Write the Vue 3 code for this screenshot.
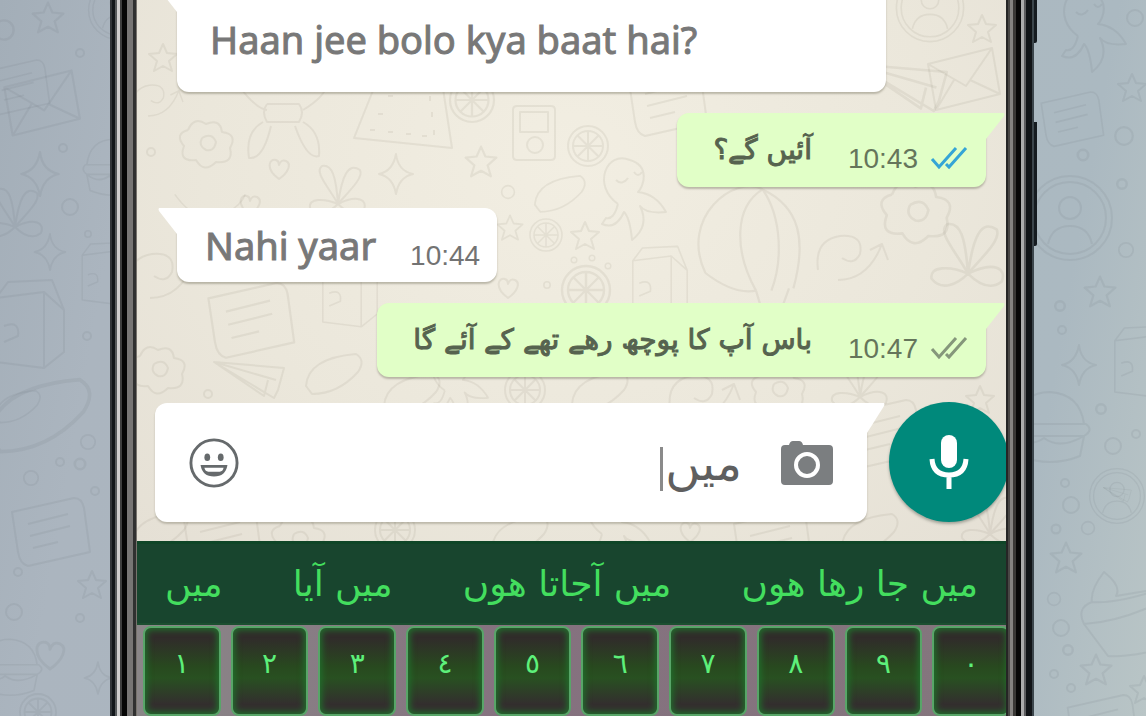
<script setup>
import { ref } from 'vue'

const draft = ref('میں')

const messages = [
  { id: 1, from: 'them', text: 'Haan jee bolo kya baat hai?', lang: 'ur-Latn', wide: true },
  { id: 2, from: 'me', text: 'آئیں گے؟', lang: 'ur', time: '10:43', seen: true },
  { id: 3, from: 'them', text: 'Nahi yaar', lang: 'ur-Latn', time: '10:44' },
  { id: 4, from: 'me', text: 'باس آپ کا پوچھ رھے تھے کے آئے گا', lang: 'ur', time: '10:47', seen: false },
]

const suggestions = ['میں', 'میں آیا', 'میں آجاتا ھوں', 'میں جا رھا ھوں']
const digits = ['١', '٢', '٣', '٤', '٥', '٦', '٧', '٨', '٩', '٠']

const star = 'M0-14L4-5 14-4 6 3 9 13 0 8-9 13-6 3-14-4-4-5Z'
const heart = 'M0 10C-14 0-10-11-3-9Q0-8 0-4Q2-10 7-8C13-5 9 4 0 10Z'
const sparkle = 'M0-20Q2-3 17 0Q3 3 0 20Q-3 3-17 0Q-3-3 0-20Z'
const ring = 'M-8 0a8 8 0 1 0 16 0a8 8 0 1 0-16 0'
const dot = 'M-4 0a4 4 0 1 0 8 0a4 4 0 1 0-8 0'
const flower = 'M-20-12Q-14-26-2-18Q12-24 14-10Q30-8 22 6Q26 22 8 20Q-4 32-12 18Q-30 20-24 4Q-34-8-20-12M-6-4Q4-10 8 0Q6 10-2 8Q-10 4-6-4'
const leaf = 'M-28 14Q-26-14 22-18Q32-12 24 0Q4 22-22 22Z'
const wheel = 'M-20 0a20 20 0 1 0 40 0a20 20 0 1 0-40 0M-15 0a15 15 0 1 0 30 0a15 15 0 1 0-30 0M-14 0H14M0-14V14M-10-10L10 10M-10 10L10-10'
const envelope = 'M-34-16L30-32 38 14-26 30ZM-34-16L4 6 30-32M-26 30L-8 0M38 14L8 0'
const page = 'M-36-16L26-30Q34-30 36-20L42 24-20 38Q-28 36-30 24ZM-20-4L20-14M-18 8L22-2M-15 20L10 14'
const gadget = 'M-18-26H16Q20-26 20-22V24Q20 28 16 28H-18Q-22 28-22 24V-22Q-22-26-18-26M-15-20H13V0H-15ZM-8 13a8 8 0 1 0 16 0a8 8 0 1 0-16 0'
const plane = 'M-34-16L36-10 30 12 26 20-34-16 28 2M-34-16L16 18 20 2'
const burger = 'M-34-4Q-30-36 0-36Q30-34 34-4ZM-36-4H36Q44 2 34 8H-34Q-42 2-36-4M-34 8Q-20 20-6 10Q10 22 34 8L30 28Q0 40-30 28Z'
const carton = 'M-34-24L14-30 34-12V30L14 46-34 40ZM-34-24L-22-40 22-42 34-12M14-30V46M-26 4Q-10-2-12 14L-26 20'
const portrait = 'M-36 0a36 36 0 1 0 72 0a36 36 0 1 0-72 0M-42 0a42 42 0 1 0 84 0a42 42 0 1 0-84 0M-11-10a11 11 0 1 0 22 0a11 11 0 1 0-22 0M-22 26Q-18 8 0 8Q18 8 22 26'
const cupcake = 'M-22 10Q-30-6-14-12Q-16-24-2-42Q16-28 10-18L46-24M-14-12Q6-10 46-22M-22 10Q10 8 46-8M-22 10L2 42Q20 44 60 34'
const squid = 'M-8 14C-34-4-20-40 4-30C24-24 18-4 12 2Q30 4 40 22Q20 24 14 16Q24 36 6 50Q4 28-2 22Q-10 40-24 34L-20 28Q-12 30-8 14M-10-10Q-4-4 2-12M8-18Q12-12 16-18'
const dog = 'M-44-32Q-28-10-16-8M44-32Q40-20 20-8M-16-14H16Q22-6 16 4H-16Q-22-6-16-14M-20 4Q-38 14-34 40Q-20 42-12 8M20 4Q38 14 36 38Q24 42 12 8'
const pizza = 'M-44 26L-20-34 44-30 54 36ZM-28 18h5M-10 20h5M8 22h5M24 24h5M36 18v5M34 0v5M32-16v5M-20 2h5M-10-16h5'
const balloon = 'M-46 30C-70-20-20-60 6-46C40-30 46 0 34 44M-46 30Q-20 50 0 46M6-46C-20-30-20 10 0 46M6-46C24-20 24 20 14 46M0 46L6 66H22L30 44'
const swirl = 'M-30 20Q-34-10-8-14Q16-16 12 4Q6 16-6 8M-10 30Q20 30 34-6L40 10M34-6L22 0'
const butterfly = 'M0 12C-10-6-24-20-16-26C-6-28-2-16 0 12C4-16 10-30 22-22C26-14 10 0 0 12C20 2 30 8 26 18C16 26 6 18 0 12C-14 6-30 6-28 16C-20 26-8 20 0 12'

const screenDoodles = [
  [star, 163, 58, 1], [swirl, 155, 95, 0.7], [flower, 208, 142, 1], [dog, 283, 118, 1],
  [dot, 151, 152, 1], [heart, 279, 169, 1], [butterfly, 338, 192, 1], [pizza, 398, 112, 1],
  [heart, 250, 205, 1], [sparkle, 396, 174, 1], [star, 481, 162, 1.1], [wheel, 472, 100, 1.1],
  [gadget, 535, 132, 1], [wheel, 588, 146, 1], [page, 665, 98, 1], [squid, 626, 190, 1],
  [ring, 508, 192, 0.8], [leaf, 560, 192, 0.9], [wheel, 546, 235, 0.8], [star, 585, 236, 1],
  [star, 510, 228, 0.9], [dot, 574, 260, 0.7], [dot, 592, 258, 0.7], [dot, 608, 266, 0.7],
  [dot, 547, 285, 0.8], [heart, 508, 288, 1], [wheel, 586, 290, 1.2], [carton, 660, 280, 0.8],
  [balloon, 756, 240, 1.1], [flower, 918, 210, 1.3], [swirl, 848, 250, 1], [butterfly, 968, 258, 1.3],
  [portrait, 930, 8, 0.8], [star, 982, 29, 1], [plane, 900, 85, 1.3], [envelope, 962, 80, 1],
  [swirl, 160, 268, 1], [page, 248, 316, 1.1], [flower, 160, 368, 1], [plane, 248, 378, 1],
  [dot, 208, 394, 1], [leaf, 334, 372, 1], [carton, 350, 290, 0.8], [leaf, 412, 392, 1],
  [squid, 452, 378, 0.9], [wheel, 525, 390, 1], [leaf, 600, 390, 1], [swirl, 700, 390, 1],
  [flower, 780, 388, 1], [butterfly, 860, 385, 1], [page, 880, 430, 1], [star, 980, 400, 1],
  [leaf, 160, 530, 1], [page, 220, 536, 1], [flower, 300, 538, 1], [wheel, 395, 530, 1],
  [leaf, 520, 534, 1], [squid, 610, 520, 1], [heart, 690, 532, 1], [page, 770, 540, 1],
  [leaf, 870, 532, 1], [butterfly, 990, 522, 1], [star, 660, 325, 0.9], [dog, 210, 220, 0.8],
]

const wallDoodles = [
  [star, 48, 18, 1.1], [ring, 4, 30, 1.2], [portrait, 118, 10, 0.7], [envelope, 40, 104, 1.05],
  [page, 16, 84, 0.8], [dot, 80, 53, 1], [dot, 63, 148, 1], [sparkle, 40, 174, 1.1],
  [burger, 114, 168, 0.8], [butterfly, 15, 215, 1], [ring, 70, 207, 1], [sparkle, 50, 252, 0.9],
  [dot, 88, 234, 0.8], [carton, 30, 322, 1], [dot, 87, 336, 1], [carton, 106, 272, 0.7],
  [leaf, 40, 412, 1.8], [leaf, 18, 405, 0.8], [ring, 88, 442, 0.9], [ring, 31, 478, 0.9],
  [dot, 80, 464, 1.3], [dot, 95, 491, 1], [page, 48, 528, 1], [dot, 60, 462, 1],
  [heart, 50, 655, 1.4], [ring, 14, 612, 1], [star, 92, 585, 1], [burger, 10, 668, 0.8],
  [dot, 80, 618, 1], [sparkle, 98, 678, 0.8], [wheel, 38, 712, 0.9], [dot, 18, 572, 1],
  [squid, 1086, 22, 1], [ring, 1135, 18, 1], [page, 1070, 116, 0.8], [star, 1132, 88, 1],
  [ring, 1124, 136, 1.1], [dot, 1083, 155, 1.3], [dot, 1122, 184, 1.2], [portrait, 1070, 218, 1],
  [ring, 1126, 250, 0.9], [star, 1100, 292, 1.1], [dot, 1060, 306, 1.2], [dot, 1062, 330, 1],
  [sparkle, 1079, 365, 1], [carton, 1142, 360, 0.8], [burger, 1050, 428, 1], [dot, 1101, 409, 1.2],
  [ring, 1113, 446, 1], [dot, 1136, 434, 1], [portrait, 1117, 496, 0.65], [plane, 1117, 494, 0.4],
  [dot, 1065, 483, 1], [ring, 1071, 505, 1], [ring, 1088, 528, 0.8], [dot, 1056, 529, 1.1],
  [star, 1066, 558, 1.1], [cupcake, 1106, 614, 1], [ring, 1054, 599, 0.8], [ring, 1061, 628, 1],
  [dot, 1068, 650, 1.2], [star, 1096, 670, 1.1], [dot, 1054, 674, 1], [dot, 1071, 688, 1],
  [page, 1100, 722, 0.9], [star, 1144, 690, 1],
]
</script>

<template>
  <div class="wall">
    <svg class="doodles" viewBox="0 0 1146 716" preserveAspectRatio="xMidYMid slice" aria-hidden="true">
      <path
        v-for="(d, i) in wallDoodles"
        :key="i"
        :d="d[0]"
        :transform="`translate(${d[1]} ${d[2]}) scale(${d[3]})`"
      />
    </svg>

    <div class="edge edge-left"></div>

    <main class="screen">
      <section class="chat">
        <svg class="doodles" viewBox="137 0 869 541" preserveAspectRatio="xMidYMid slice" aria-hidden="true">
          <path
            v-for="(d, i) in screenDoodles"
            :key="i"
            :d="d[0]"
            :transform="`translate(${d[1]} ${d[2]}) scale(${d[3]})`"
          />
        </svg>

        <div class="messages">
          <article v-for="m in messages" :key="m.id" class="bubble" :class="[m.from, { wide: m.wide }]">
            <svg class="tail" viewBox="0 0 19 26" aria-hidden="true">
              <path d="M19 0H1Q0 1 1 3L19 26Z" />
            </svg>
            <p :lang="m.lang" :dir="m.lang === 'ur' ? 'rtl' : 'ltr'">{{ m.text }}</p>
            <time v-if="m.time">{{ m.time }}</time>
            <svg v-if="m.from === 'me'" class="ticks" :class="{ seen: m.seen }" viewBox="0 0 38 26" aria-hidden="true">
              <path d="M2 14L9 22 26 3M16 19L19 22 36 3" />
            </svg>
          </article>
        </div>

        <form class="composer" @submit.prevent>
          <div class="field">
            <svg class="tail" viewBox="0 0 19 30" aria-hidden="true">
              <path d="M19 0H2Q1 1 2 3L19 30Z" />
            </svg>
            <button type="button" class="icon" aria-label="Emoji">
              <svg class="emoji" viewBox="0 0 52 52">
                <circle cx="26" cy="26" r="24" fill="none" stroke="#666a6c" stroke-width="3" />
                <ellipse cx="19" cy="20" rx="3" ry="4" fill="#666a6c" />
                <ellipse cx="33" cy="20" rx="3" ry="4" fill="#666a6c" />
                <path d="M12 28H40Q38 40 26 40Q14 40 12 28Z" fill="#666a6c" />
                <path d="M16 31H36Q35 35 32 35H20Q17 35 16 31Z" fill="#fff" />
              </svg>
            </button>
            <span class="caret"></span>
            <input v-model="draft" type="text" dir="rtl" lang="ur" size="4" aria-label="Message" />
            <button type="button" class="icon" aria-label="Camera">
              <svg class="camera" viewBox="0 0 52 46">
                <path d="M4 5H8Q9 1 12 1H18Q21 1 22 5H48Q52 5 52 9V41Q52 45 48 45H4Q0 45 0 41V9Q0 5 4 5Z" fill="#7b7e80" />
                <circle cx="26" cy="25" r="11" fill="none" stroke="#fff" stroke-width="4" />
              </svg>
            </button>
          </div>
          <button type="button" class="mic" aria-label="Record voice message">
            <svg viewBox="0 0 40 54">
              <rect x="12" y="0" width="16" height="33" rx="8" fill="#fff" />
              <path d="M3 24Q4 40 20 40Q36 40 37 24M20 40V54" fill="none" stroke="#fff" stroke-width="5" />
            </svg>
          </button>
        </form>
      </section>

      <section class="keyboard">
        <div class="suggestions">
          <button v-for="s in suggestions" :key="s" type="button" lang="ur" dir="rtl">{{ s }}</button>
        </div>
        <div class="keys">
          <button v-for="k in digits" :key="k" type="button">{{ k }}</button>
        </div>
      </section>
    </main>

    <div class="edge edge-right">
      <div class="power"></div>
      <div class="volume"></div>
    </div>
  </div>
</template>

<style>
body {
  margin: 0;
}
</style>

<style scoped>
.wall {
  position: relative;
  display: grid;
  grid-template-columns: 110fr 27px 869fr 28px 112fr;
  height: 100vh;
  overflow: hidden;
  background: linear-gradient(100deg, #a3aeb8 0%, #abb5bf 12%, #abb9c1 88%, #b9c5c6 100%);
  font-family: "Liberation Sans", Arial, sans-serif;
}

button {
  margin: 0;
  padding: 0;
  border: 0;
  background: none;
  font: inherit;
  cursor: pointer;
}

.doodles {
  position: absolute;
  inset: 0;
  width: 100%;
  height: 100%;
  fill: none;
  stroke: #68757a;
  stroke-opacity: 0.12;
  stroke-width: 2;
  stroke-linejoin: round;
}

.edge {
  position: relative;
}

.edge-left {
  grid-column: 2;
  background: linear-gradient(90deg, #303539 0 2px, #12171b 2px 5px, #565a5c 5px 7px, #cfcfcf 7px 10px, #3d3d3d 10px 12px, #050505 12px 17px, #777574 17px 23px, #303030 23px 26px, #77736d 26px);
}

.edge-right {
  grid-column: 4;
  background: linear-gradient(90deg, #252525 0 2px, #484644 2px 4px, #858381 4px 7px, #3a3836 7px 10px, #080808 10px 15px, #adadad 15px 18px, #5d5d5f 18px 20px, #111417 20px 26px, #3c464c 26px);
}

.power,
.volume {
  position: absolute;
  left: 100%;
  width: 3px;
  background: #151b20;
  border-radius: 0 0 2px 0;
}

.power {
  top: 0;
  height: 43px;
}

.volume {
  top: 122px;
  height: 124px;
}

.screen {
  position: relative;
  grid-column: 3;
  display: flex;
  flex-direction: column;
  min-width: 0;
  overflow: hidden;
}

.chat {
  position: relative;
  flex: 1;
  min-height: 0;
  display: flex;
  flex-direction: column;
  justify-content: flex-end;
  gap: 26px;
  padding-bottom: 19px;
  overflow: hidden;
  background: radial-gradient(ellipse at 50% 30%, #f2eee2 0%, #ebe7db 60%, #e5e0d5 100%);
}

.chat .doodles {
  stroke: #8c8473;
}

.messages {
  position: relative;
  display: flex;
  flex-direction: column;
  gap: 21px;
  padding: 0 20px 0 40px;
}

.bubble {
  position: relative;
  display: flex;
  align-items: center;
  height: 74px;
  border-radius: 12px;
  box-shadow: 0 2px 2px rgba(90, 85, 65, 0.35);
}

.bubble p {
  margin: 0;
  white-space: nowrap;
  color: #787878;
  -webkit-text-stroke: 1px currentColor;
}

.bubble time {
  padding-top: 18px;
  font-size: 28px;
  line-height: 32px;
}

.them {
  align-self: flex-start;
  gap: 34px;
  padding: 0 17px 0 28px;
  background: #fff;
  border-top-left-radius: 0;
}

.them p {
  font-family: "Noto Sans", "Open Sans", sans-serif;
  font-size: 38px;
  line-height: 48px;
}

.them time {
  padding-top: 22px;
  color: #737373;
}

.wide {
  box-sizing: border-box;
  width: calc(100% - 100px);
  height: 106px;
  padding-left: 33px;
}

.me {
  align-self: flex-end;
  padding: 0 18px 0 36px;
  background: #e1ffc7;
  border-top-right-radius: 0;
}

.me p {
  margin-right: 36px;
  font-family: "DejaVu Sans", "Liberation Sans", sans-serif;
  font-size: 28px;
  line-height: 48px;
  color: #56634f;
}

.me time {
  color: #65755b;
}

.tail {
  position: absolute;
  top: 0;
  width: 19px;
  height: 26px;
  fill: #fff;
}

.them .tail {
  right: 100%;
}

.me .tail {
  left: 100%;
  transform: scaleX(-1);
  fill: #e1ffc7;
}

.ticks {
  width: 38px;
  height: 26px;
  margin: 16px 0 0 12px;
  fill: none;
  stroke: #85977b;
  stroke-width: 3;
}

.ticks.seen {
  stroke: #35a5d6;
}

.composer {
  position: relative;
  display: flex;
  align-items: center;
  gap: 22px;
  margin: 0 -3px 0 18px;
}

.field {
  position: relative;
  flex: 1;
  min-width: 0;
  display: flex;
  align-items: center;
  height: 119px;
  padding: 0 34px;
  box-sizing: border-box;
  border-radius: 12px 0 12px 12px;
  background: #fff;
  box-shadow: 0 2px 2px rgba(90, 85, 65, 0.3);
}

.field .tail {
  left: 100%;
  height: 30px;
  transform: scaleX(-1);
}

.icon svg {
  display: block;
}

.emoji {
  width: 50px;
  height: 50px;
}

.camera {
  width: 52px;
  height: 46px;
}

.caret {
  width: 3px;
  height: 44px;
  margin: 12px 0 0 auto;
  background: #8a8a8a;
}

.field input {
  field-sizing: content;
  height: 80px;
  margin: 0 39px 0 2px;
  padding: 0;
  border: 0;
  outline: 0;
  background: none;
  font-family: "DejaVu Sans", "Liberation Sans", sans-serif;
  font-size: 48px;
  line-height: 80px;
  color: #5f5f5f;
}

.mic {
  flex: none;
  display: grid;
  place-items: center;
  width: 120px;
  height: 120px;
  margin-top: -2px;
  border-radius: 50%;
  background: #00897b;
  box-shadow: 0 2px 3px rgba(60, 70, 60, 0.4);
}

.mic svg {
  width: 40px;
  height: 54px;
}

.keyboard {
  background: linear-gradient(90deg, #8a8688, #85717f 45%, #84767d);
}

.suggestions {
  display: flex;
  align-items: center;
  justify-content: space-between;
  height: 84px;
  padding: 0 28px;
  box-sizing: border-box;
  border-top: 3px solid #0f4527;
  border-bottom: 2px solid #1c4f30;
  background: #18452e;
}

.suggestions button {
  font-family: "DejaVu Sans", "Liberation Sans", sans-serif;
  font-size: 36px;
  line-height: 48px;
  color: #43de5e;
  white-space: nowrap;
}

.keys {
  display: grid;
  grid-template-columns: repeat(10, 1fr);
  gap: 10px;
  margin-right: -4px;
  padding: 1px 0 0 6px;
}

.keys button {
  height: 90px;
  padding-bottom: 14px;
  border: 2px solid #58a568;
  border-radius: 8px;
  background: linear-gradient(#302c2a 12%, #28491f 45%, #285021 58%, #332f2e 88%);
  box-shadow: inset 0 0 6px 2px #21702c;
  font-family: "DejaVu Sans", sans-serif;
  font-size: 28px;
  line-height: 32px;
  color: #5df07a;
}
</style>
